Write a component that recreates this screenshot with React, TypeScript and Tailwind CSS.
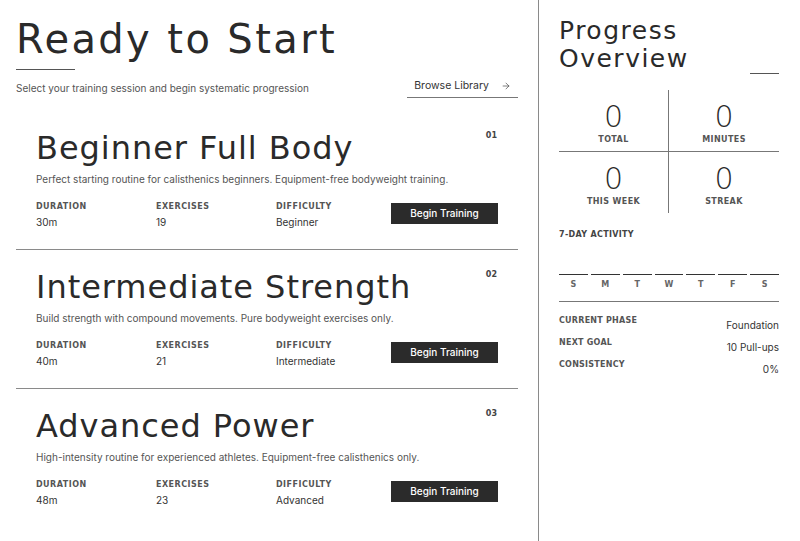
import { ArrowRight } from "lucide-react";

const head = "font-['DejaVu_Sans',sans-serif]";
const body = "font-['Inter',sans-serif]";

interface Routine {
  num: string;
  title: string;
  desc: string;
  duration: string;
  exercises: number;
  difficulty: string;
}

const routines: Routine[] = [
  {
    num: "01",
    title: "Beginner Full Body",
    desc: "Perfect starting routine for calisthenics beginners. Equipment-free bodyweight training.",
    duration: "30m",
    exercises: 19,
    difficulty: "Beginner",
  },
  {
    num: "02",
    title: "Intermediate Strength",
    desc: "Build strength with compound movements. Pure bodyweight exercises only.",
    duration: "40m",
    exercises: 21,
    difficulty: "Intermediate",
  },
  {
    num: "03",
    title: "Advanced Power",
    desc: "High-intensity routine for experienced athletes. Equipment-free calisthenics only.",
    duration: "48m",
    exercises: 23,
    difficulty: "Advanced",
  },
];

function Label({ children }: { children: React.ReactNode }) {
  return (
    <div className={`${head} text-[8px] font-bold tracking-[0.06em] text-[#555] uppercase leading-[10px]`}>
      {children}
    </div>
  );
}

function RoutineCard({ r, last }: { r: Routine; last: boolean }) {
  return (
    <div className={`relative px-5 pt-[18px] h-[139px] ${last ? "" : "border-b border-[#8a8a8a]"}`}>
      <span className={`${head} absolute right-[21px] top-[19px] text-[8px] font-bold text-[#444]`}>{r.num}</span>
      <h2 className={`${head} text-[32px] leading-[38px] text-[#2a2a2a] tracking-[0.03em]`}>{r.title}</h2>
      <p className={`${body} text-[10px] text-[#555] mt-[5px]`}>{r.desc}</p>
      <div className="flex items-start mt-[15px]">
        <div className="w-[120px]">
          <Label>Duration</Label>
          <div className={`${body} text-[10px] text-[#333] mt-[3px]`}>{r.duration}</div>
        </div>
        <div className="w-[120px]">
          <Label>Exercises</Label>
          <div className={`${body} text-[10px] text-[#333] mt-[3px]`}>{r.exercises}</div>
        </div>
        <div className="w-[115px]">
          <Label>Difficulty</Label>
          <div className={`${body} text-[10px] text-[#333] mt-[3px]`}>{r.difficulty}</div>
        </div>
        <button className={`${body} ml-auto mt-[1px] w-[107px] h-[21px] bg-[#2b2b2b] text-white text-[10px] font-medium`}>
          Begin Training
        </button>
      </div>
    </div>
  );
}

function Stat({ value, label, className }: { value: number; label: string; className: string }) {
  return (
    <div className={`flex flex-col items-center ${className}`}>
      <div className={`${head} text-[30px] leading-[32px] font-extralight text-[#2a2a2a]`}>{value}</div>
      <div className={`${head} text-[8px] font-bold tracking-[0.05em] text-[#555] mt-[1px]`}>{label}</div>
    </div>
  );
}

export default function App() {
  const days = ["S", "M", "T", "W", "T", "F", "S"];
  return (
    <div className="w-[800px] h-[541px] bg-white flex overflow-hidden">
      <main className="w-[539px] border-r border-[#8a8a8a] pl-4 pr-5">
        <h1 className={`${head} text-[40px] leading-[46px] mt-[16px] text-[#2a2a2a] tracking-[0.06em]`}>Ready to Start</h1>
        <div className="w-[59px] h-px bg-[#555] mt-[7px]" />
        <div className="flex items-end justify-between mt-[8px]">
          <p className={`${body} text-[10px] text-[#555] mb-[2px]`}>Select your training session and begin systematic progression</p>
          <button className={`${body} flex items-center gap-[12px] whitespace-nowrap text-[10.5px] text-[#333] border-b border-[#777] px-[7px] pb-[3px]`}>
            Browse Library
            <ArrowRight size={10} strokeWidth={1.5} />
          </button>
        </div>
        <div className="mt-[13px]">
          {routines.map((r, i) => (
            <RoutineCard key={r.num} r={r} last={i === routines.length - 1} />
          ))}
        </div>
      </main>
      <aside className="flex-1 pl-[20px] pr-[21px]">
        <h2 className={`${head} text-[25px] leading-[28px] mt-[17px] text-[#2a2a2a] tracking-[0.06em]`}>
          Progress
          <br />
          Overview
        </h2>
        <div className="flex justify-end">
          <div className="w-[29px] h-px bg-[#555]" />
        </div>
        <div className="grid grid-cols-2 mt-[16px]">
          <Stat value={0} label="TOTAL" className="border-r border-b border-[#777] pt-[11px] h-[62px]" />
          <Stat value={0} label="MINUTES" className="border-b border-[#777] pt-[11px] h-[62px]" />
          <Stat value={0} label="THIS WEEK" className="border-r border-[#777] pt-[11px] h-[61px]" />
          <Stat value={0} label="STREAK" className="pt-[11px] h-[61px]" />
        </div>
        <div className={`${head} text-[8px] font-bold tracking-[0.04em] text-[#444] mt-[16px]`}>7-DAY ACTIVITY</div>
        <div className="grid grid-cols-7 gap-[3px] mt-[33px]">
          {days.map((d, i) => (
            <div key={i} className="flex flex-col items-center">
              <div className="w-full h-px bg-[#333]" />
              <span className={`${head} text-[8px] font-bold text-[#666] mt-[4px]`}>{d}</span>
            </div>
          ))}
        </div>
        <div className="h-px bg-[#777] mt-[10px]" />
        <div className="mt-[13px] flex flex-col gap-[8px]">
          {[
            ["CURRENT PHASE", "Foundation"],
            ["NEXT GOAL", "10 Pull-ups"],
            ["CONSISTENCY", "0%"],
          ].map(([k, v]) => (
            <div key={k} className="flex justify-between items-start h-[14px]">
              <span className={`${head} text-[8px] font-bold tracking-[0.03em] text-[#555]`}>{k}</span>
              <span className={`${body} text-[10px] text-[#333] mt-[3px]`}>{v}</span>
            </div>
          ))}
        </div>
      </aside>
    </div>
  );
}
